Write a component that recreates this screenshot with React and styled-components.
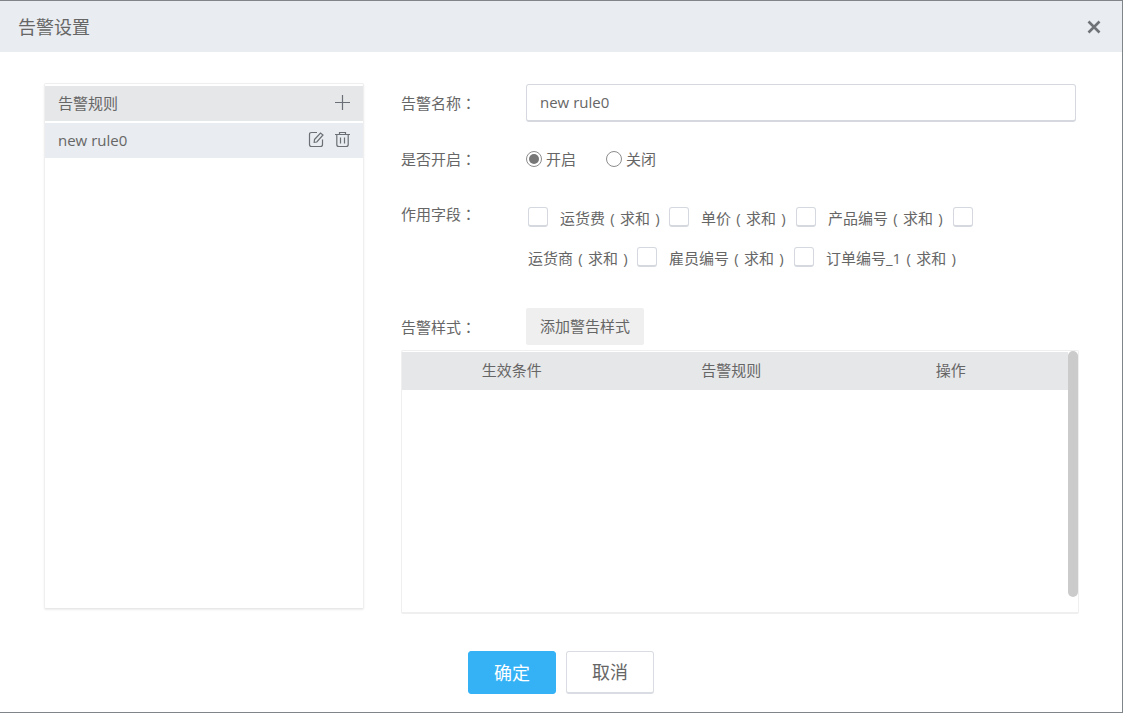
import React from "react";
import styled, { createGlobalStyle } from "styled-components";

const GlobalStyle = createGlobalStyle`
    html, body {
        margin: 0;
        padding: 0;
        background: #fff;
    }
    * {
        box-sizing: border-box;
    }
`;

const Dialog = styled.div`
    display: flex;
    flex-direction: column;
    width: 1123px;
    height: 713px;
    background: #fff;
    border-top: 1px solid #7f8589;
    border-right: 1px solid #7f8589;
    border-bottom: 1px solid #7f8589;
    font-family: "Open Sans", "Noto Sans CJK SC", sans-serif;
    font-size: 15px;
    color: #666;
    overflow: hidden;
`;

const Header = styled.header`
    display: flex;
    flex: none;
    align-items: center;
    justify-content: space-between;
    height: 51px;
    padding: 0 21px 2px 18px;
    background: #e9ecf0;
    font-size: 18px;
`;

const CloseIcon = styled.svg`
    display: block;
    width: 14px;
    height: 14px;
    margin-top: 2px;
`;

const Body = styled.div`
    display: flex;
    flex: none;
    height: 580px;
    padding: 31px 43px 0 44px;
`;

const RulePanel = styled.aside`
    flex: none;
    width: 320px;
    height: 526px;
    padding-top: 2px;
    border: 1px solid #efefef;
    border-bottom-color: #e8e8e8;
    border-radius: 2px;
    box-shadow: 0 1px 2px rgba(0, 0, 0, 0.08);
`;

const RuleRow = styled.div`
    display: flex;
    align-items: center;
    justify-content: space-between;
    height: 35px;
    margin-bottom: ${(props) => (props.$head ? "2px" : "0")};
    padding: 0 12px 2px 13px;
    background: ${(props) => (props.$head ? "#e6e7e9" : "#e9ecf0")};
`;

const RowIcons = styled.div`
    display: flex;
    align-items: center;
    gap: 9px;
`;

const RowIcon = styled.svg`
    display: block;
    width: 17px;
    height: 17px;
    fill: none;
    stroke: #6a7076;
    stroke-width: 1.2;
`;

const Form = styled.main`
    flex: none;
    width: 678px;
    margin-left: 37px;
    padding-top: 1px;
`;

const FormRow = styled.div`
    display: flex;
    align-items: ${(props) => (props.$top ? "flex-start" : "center")};
    height: ${(props) => props.$height}px;
    margin-top: ${(props) => props.$gap || 0}px;
`;

const Label = styled.label`
    flex: none;
    width: 125px;
    padding-top: ${(props) => props.$drop || 0}px;
    padding-bottom: 2px;
`;

// centred full-width colon, as in the reference
const Colon = styled.span`
    font-family: "Noto Sans CJK TC", sans-serif;
`;

const Paren = styled.span`
    display: inline-block;
    width: 15px;
    text-align: center;
`;

const NameInput = styled.div`
    display: flex;
    align-items: center;
    width: 550px;
    height: 38px;
    padding: 0 0 1px 13px;
    border: 1px solid #d5d9df;
    border-bottom-width: 2px;
    border-radius: 3px;
`;

const RadioItem = styled.span`
    display: flex;
    align-items: center;
    gap: 4px;
    margin-right: 30px;
`;

const RadioDot = styled.span`
    display: flex;
    align-items: center;
    justify-content: center;
    width: 16px;
    height: 16px;
    border: 1px solid #8c8c8c;
    border-radius: 50%;

    &::after {
        content: "";
        display: ${(props) => (props.$checked ? "block" : "none")};
        width: 10px;
        height: 10px;
        border-radius: 50%;
        background: #777;
    }
`;

const RadioText = styled.span`
    margin-bottom: 2px;
`;

const FieldList = styled.div`
    display: flex;
    flex-wrap: wrap;
    row-gap: 20px;
    width: 470px;
    padding: 12px 0 0 2px;
`;

const CheckBox = styled.span`
    display: block;
    flex: none;
    width: 20px;
    height: 20px;
    border: 1px solid #d5d9df;
    border-bottom-width: 2px;
    border-radius: 3px;
`;

const FieldName = styled.span`
    flex: none;
    width: ${(props) => props.$width}px;
    height: 20px;
    line-height: 22px;
    margin-left: ${(props) => (props.$flush ? "0" : "12px")};
    white-space: nowrap;
`;

const GhostButton = styled.div`
    display: flex;
    align-items: center;
    justify-content: center;
    width: 118px;
    height: 37px;
    padding-bottom: 2px;
    border-radius: 2px;
    background: #efefef;
`;

const TableWrap = styled.div`
    position: relative;
    width: 678px;
    height: 264px;
    margin-top: 5px;
    padding-top: 1px;
    border: 1px solid #efefef;
    border-bottom-width: 2px;
    border-radius: 2px;
`;

const TableHead = styled.div`
    display: grid;
    grid-template-columns: repeat(3, 219.5px);
    align-items: center;
    width: 666px;
    height: 38px;
    padding-bottom: 4px;
    background: #e6e7e9;
`;

const HeadCell = styled.div`
    text-align: center;
`;

const ScrollThumb = styled.div`
    position: absolute;
    top: 0;
    right: 0;
    width: 10px;
    height: 246px;
    border-radius: 5px;
    background: #cbcbcb;
`;

const Footer = styled.footer`
    display: flex;
    flex: none;
    justify-content: center;
    gap: 10px;
    padding-top: 19px;
`;

const Button = styled.div`
    display: flex;
    align-items: center;
    justify-content: center;
    width: 88px;
    height: 43px;
    padding-bottom: 2px;
    border: 1px solid ${(props) => (props.$primary ? "#35b2f6" : "#d9dde3")};
    border-bottom-width: ${(props) => (props.$primary ? "1px" : "2px")};
    border-radius: 3px;
    background: ${(props) => (props.$primary ? "#35b2f6" : "#fff")};
    color: ${(props) => (props.$primary ? "#fff" : "#666")};
    font-size: 18px;
`;

const fields = [
    { name: "运货费", width: 109 },
    { name: "单价", width: 95 },
    { name: "产品编号", width: 125 },
    { name: "运货商", width: 109, flush: true },
    { name: "雇员编号", width: 125 },
    { name: "订单编号_1", width: 140 },
];

function FieldOptions() {
    return (
        <FieldList>
            {fields.map((field, index) => (
                <React.Fragment key={field.name}>
                    {index !== 3 && <CheckBox />}
                    <FieldName $width={field.width} $flush={field.flush}>
                        {field.name}
                        <Paren>(</Paren>求和<Paren>)</Paren>
                    </FieldName>
                    {index === 2 && <CheckBox />}
                </React.Fragment>
            ))}
        </FieldList>
    );
}

export default function App() {
    return (
        <>
            <GlobalStyle />
            <Dialog>
                <Header>
                    <span>告警设置</span>
                    <CloseIcon viewBox="0 0 14 14">
                        <path d="M1.5 1.5 L12.5 12.5 M12.5 1.5 L1.5 12.5" stroke="#6f7377" strokeWidth="2.6" />
                    </CloseIcon>
                </Header>
                <Body>
                    <RulePanel>
                        <RuleRow $head>
                            <span>告警规则</span>
                            <RowIcon viewBox="0 0 17 17">
                                <path d="M8.5 1 V16 M1 8.5 H16" />
                            </RowIcon>
                        </RuleRow>
                        <RuleRow>
                            <span>new rule0</span>
                            <RowIcons>
                                <RowIcon viewBox="0 0 17 17">
                                    <path d="M14.5 8.5 V13.5 Q14.5 15.5 12.5 15.5 H3.5 Q1.5 15.5 1.5 13.5 V3.5 Q1.5 1.5 3.5 1.5 H9" />
                                    <path d="M6.5 8.5 L12.5 2 L15 4 L8.8 11 L6.2 11.4 Z" />
                                </RowIcon>
                                <RowIcon viewBox="0 0 17 17">
                                    <path d="M1 3.5 H16 M5.5 3.5 V1.5 H11.5 V3.5 M2.8 3.5 V13.5 Q2.8 15.5 4.8 15.5 H12.2 Q14.2 15.5 14.2 13.5 V3.5 M6.5 6.5 V12.5 M10.5 6.5 V12.5" />
                                </RowIcon>
                            </RowIcons>
                        </RuleRow>
                    </RulePanel>
                    <Form>
                        <FormRow $height={38}>
                            <Label>告警名称<Colon>：</Colon></Label>
                            <NameInput>new rule0</NameInput>
                        </FormRow>
                        <FormRow $height={40} $gap={17}>
                            <Label>是否开启<Colon>：</Colon></Label>
                            <RadioItem>
                                <RadioDot $checked />
                                <RadioText>开启</RadioText>
                            </RadioItem>
                            <RadioItem>
                                <RadioDot />
                                <RadioText>关闭</RadioText>
                            </RadioItem>
                        </FormRow>
                        <FormRow $top $height={113} $gap={16}>
                            <Label $drop={8}>作用字段<Colon>：</Colon></Label>
                            <FieldOptions />
                        </FormRow>
                        <FormRow $height={37}>
                            <Label $drop={2}>告警样式<Colon>：</Colon></Label>
                            <GhostButton>添加警告样式</GhostButton>
                        </FormRow>
                        <TableWrap>
                            <TableHead>
                                <HeadCell>生效条件</HeadCell>
                                <HeadCell>告警规则</HeadCell>
                                <HeadCell>操作</HeadCell>
                            </TableHead>
                            <ScrollThumb />
                        </TableWrap>
                    </Form>
                </Body>
                <Footer>
                    <Button $primary>确定</Button>
                    <Button>取消</Button>
                </Footer>
            </Dialog>
        </>
    );
}
